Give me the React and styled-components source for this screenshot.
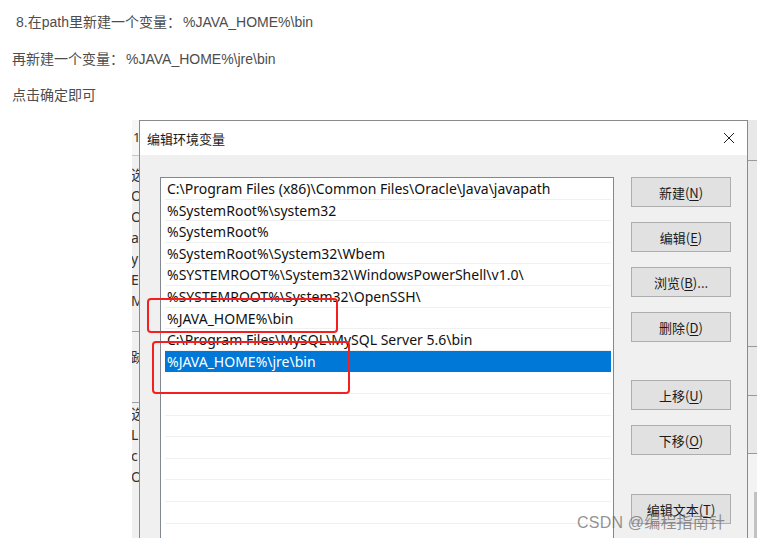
import React from "react";
import styled, { createGlobalStyle } from "styled-components";

const GlobalStyle = createGlobalStyle`
  html, body {
    margin: 0;
    padding: 0;
    background: #fff;
  }
  body {
    width: 762px;
    height: 538px;
    overflow: hidden;
  }
`;

const paths = [
  "C:\\Program Files (x86)\\Common Files\\Oracle\\Java\\javapath",
  "%SystemRoot%\\system32",
  "%SystemRoot%",
  "%SystemRoot%\\System32\\Wbem",
  "%SYSTEMROOT%\\System32\\WindowsPowerShell\\v1.0\\",
  "%SYSTEMROOT%\\System32\\OpenSSH\\",
  "%JAVA_HOME%\\bin",
  "C:\\Program Files\\MySQL\\MySQL Server 5.6\\bin",
  "%JAVA_HOME%\\jre\\bin",
  "",
  "",
  "",
  "",
  "",
  "",
  "",
  "",
];

const buttons = [
  { label: "新建", key: "N" },
  { label: "编辑", key: "E" },
  { label: "浏览", key: "B", tail: "..." },
  { label: "删除", key: "D" },
  { label: "上移", key: "U", gap: 38 },
  { label: "下移", key: "O" },
  { label: "编辑文本", key: "T", gap: 39 },
];

const backLetters = ["选", "Or", "Or", "a", "y", "E", "M"];
const backLettersLow = ["选", "L", "c", "Or"];

export default function App() {
  return (
    <>
      <GlobalStyle />
      <Page>
        <Article>
          <Para indent={16}>8.在path里新建一个变量<Colon>：</Colon>%JAVA_HOME%\bin</Para>
          <Para>再新建一个变量<Colon>：</Colon>%JAVA_HOME%\jre\bin</Para>
          <Para>点击确定即可</Para>
        </Article>
        <Shot>
          <BackLeft>
            <BackTitle>1</BackTitle>
            <BackList>
              {backLetters.map((l, i) => (
                <BackItem key={i}>{l}</BackItem>
              ))}
            </BackList>
            <BackRule />
            <BackItem tall>跡</BackItem>
            <BackRule />
            {backLettersLow.map((l, i) => (
              <BackItem key={i}>{l}</BackItem>
            ))}
          </BackLeft>
          <Dialog>
            <TitleBar>
              <Title>编辑环境变量</Title>
              <CloseIcon width="12" height="12" viewBox="0 0 12 12">
                <path d="M1 1 L11 11 M11 1 L1 11" stroke="#222" strokeWidth="1" fill="none" />
              </CloseIcon>
            </TitleBar>
            <Body>
              <ListBox>
                {paths.map((p, i) => (
                  <Row key={i} selected={i === 8}>
                    {p}
                  </Row>
                ))}
              </ListBox>
              <ButtonCol>
                {buttons.map((b) => (
                  <Button key={b.key} gap={b.gap}>
                    {b.label}(<u>{b.key}</u>){b.tail}
                  </Button>
                ))}
              </ButtonCol>
            </Body>
          </Dialog>
          <BackRight>
            <RightBand h={40} />
            <RightBand h={185} />
            <RightBand h={48} />
            <RightBand h={57} />
            <ScrollTrack />
          </BackRight>
          <Mark top={178} left={15} w={191} h={35} />
          <Mark top={221} left={20} w={198} h={53} />
          <Watermark>CSDN @编程指南针</Watermark>
        </Shot>
      </Page>
    </>
  );
}

const Page = styled.div`
  width: 762px;
  height: 538px;
  display: flex;
  flex-direction: column;
  font-family: "Liberation Sans", "Noto Sans CJK SC", sans-serif;
`;

const Article = styled.div`
  display: flex;
  flex-direction: column;
  gap: 20.5px;
  padding: 14px 0 0 12px;
  height: 120px;
  flex-shrink: 0;
  box-sizing: border-box;
`;

const Para = styled.p`
  margin: 0;
  padding-left: ${(p) => (p.indent ? p.indent - 12 : 0)}px;
  font-size: 14px;
  line-height: 16px;
  color: #4d4d4d;
`;

const Colon = styled.span`
  display: inline-block;
  width: 14px;
  margin-right: 2px;
  text-align: center;
`;

const Shot = styled.div`
  position: relative;
  margin-left: 132px;
  width: 625px;
  flex: 1;
  display: flex;
  overflow: hidden;
  font-family: "Noto Sans", "Noto Sans CJK SC", sans-serif;
`;

const BackLeft = styled.div`
  width: 8px;
  background: #f0f0f0;
  overflow: hidden;
  display: flex;
  flex-direction: column;
  font-size: 14px;
  color: #333;
`;

const BackTitle = styled.div`
  height: 35px;
  background: #f7f7f7;
  border-bottom: 1px solid #c8c8c8;
  line-height: 34px;
  padding-left: 1px;
  font-size: 13px;
`;

const BackList = styled.div`
  padding-top: 8px;
`;

const BackItem = styled.div`
  height: ${(p) => (p.tall ? 50 : 21)}px;
  line-height: ${(p) => (p.tall ? 50 : 21)}px;
  white-space: nowrap;
  margin-left: -1px;
`;

const BackRule = styled.div`
  margin-top: 20px;
  height: 1px;
  background: #a0a0a0;
`;

const Dialog = styled.div`
  width: 607px;
  flex-shrink: 0;
  border: 1px solid #8a8a8a;
  border-bottom: none;
  background: #f0f0f0;
  display: flex;
  flex-direction: column;
`;

const TitleBar = styled.div`
  height: 34px;
  background: #fff;
  display: flex;
  align-items: center;
  justify-content: space-between;
  padding: 0 12px 0 7px;
`;

const Title = styled.span`
  font-family: "Noto Sans CJK SC", sans-serif;
  font-size: 13px;
  color: #1a1a1a;
`;

const CloseIcon = styled.svg`
  display: block;
`;

const Body = styled.div`
  display: flex;
  padding: 22px 0 0 20px;
  flex: 1;
  min-height: 0;
`;

const ListBox = styled.div`
  width: 452px;
  background: #fff;
  border: 1px solid #828790;
  border-bottom: none;
  display: flex;
  flex-direction: column;
  overflow: hidden;
`;

const Row = styled.div`
  flex-shrink: 0;
  height: 21.6px;
  box-sizing: border-box;
  margin: 0 2px 0 4px;
  padding-left: 2px;
  font-size: 14px;
  line-height: 21px;
  white-space: nowrap;
  color: ${(p) => (p.selected ? "#fff" : "#111")};
  background: ${(p) => (p.selected ? "#0078d7" : "transparent")};
  border-bottom: 1px solid ${(p) => (p.selected ? "#0078d7" : "#f0f0f0")};
`;

const ButtonCol = styled.div`
  display: flex;
  flex-direction: column;
  gap: 15px;
  margin-left: 17px;
`;

const Button = styled.div`
  width: 100px;
  height: 30px;
  box-sizing: border-box;
  flex-shrink: 0;
  margin-top: ${(p) => (p.gap ? p.gap - 15 : 0)}px;
  background: #e1e1e1;
  border: 1px solid #adadad;
  display: flex;
  align-items: center;
  justify-content: center;
  font-family: "Noto Sans CJK SC", sans-serif;
  font-size: 13px;
  color: #1a1a1a;
  u {
    text-underline-offset: 2px;
  }
`;

const BackRight = styled.div`
  flex: 1;
  display: flex;
  flex-direction: column;
  background: #f3f3f3;
  position: relative;
`;

const RightBand = styled.div`
  height: ${(p) => p.h}px;
  border-bottom: 1px solid #9a9a9a;
  background: #e8e8e8;
`;

const ScrollTrack = styled.div`
  margin-top: 38px;
  margin-left: 6px;
  width: 3px;
  flex: 1;
  background: #c2c2c2;
`;

const Mark = styled.div`
  position: absolute;
  top: ${(p) => p.top}px;
  left: ${(p) => p.left}px;
  width: ${(p) => p.w}px;
  height: ${(p) => p.h}px;
  box-sizing: border-box;
  border: 2.5px solid #f51f1f;
  border-radius: 4px;
`;

const Watermark = styled.div`
  position: absolute;
  left: 445px;
  top: 389px;
  font-family: "Liberation Sans", "Noto Sans CJK SC", sans-serif;
  font-size: 16px;
  color: rgba(110, 110, 110, 0.75);
  white-space: nowrap;
  letter-spacing: 0.2px;
`;
